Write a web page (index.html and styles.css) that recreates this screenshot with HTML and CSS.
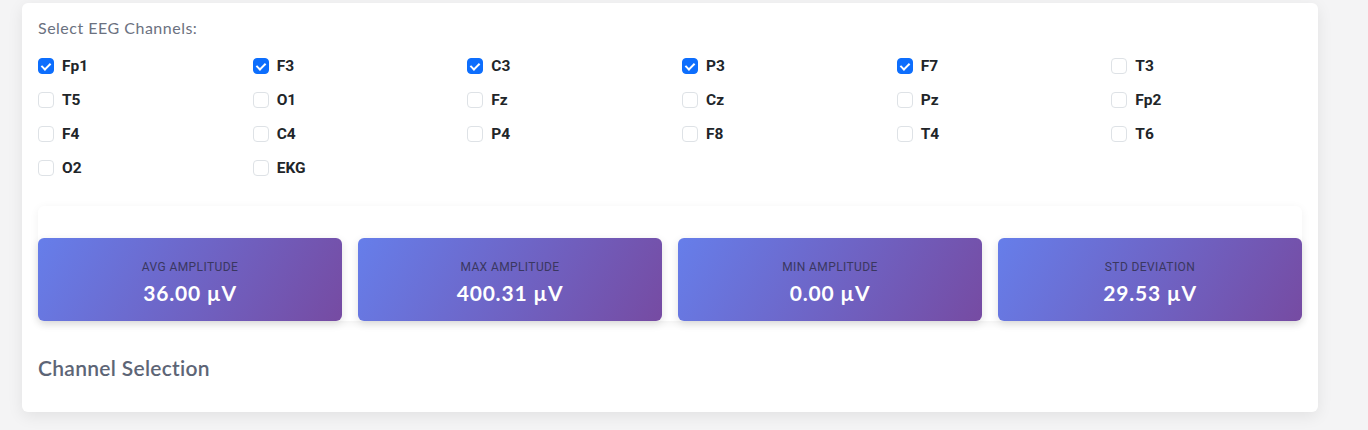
FILE: index.html
```html
<!DOCTYPE html>
<html lang="en">
<head>
<meta charset="utf-8">
<title>EEG Channels</title>
<link rel="stylesheet" href="styles.css">
</head>
<body>
<div class="panel">
  <div class="section-label">Select EEG Channels:</div>
  <div class="channel-grid">
    <label class="check"><span class="box checked"></span><span class="name">Fp1</span></label>
    <label class="check"><span class="box checked"></span><span class="name">F3</span></label>
    <label class="check"><span class="box checked"></span><span class="name">C3</span></label>
    <label class="check"><span class="box checked"></span><span class="name">P3</span></label>
    <label class="check"><span class="box checked"></span><span class="name">F7</span></label>
    <label class="check"><span class="box"></span><span class="name">T3</span></label>
    <label class="check"><span class="box"></span><span class="name">T5</span></label>
    <label class="check"><span class="box"></span><span class="name">O1</span></label>
    <label class="check"><span class="box"></span><span class="name">Fz</span></label>
    <label class="check"><span class="box"></span><span class="name">Cz</span></label>
    <label class="check"><span class="box"></span><span class="name">Pz</span></label>
    <label class="check"><span class="box"></span><span class="name">Fp2</span></label>
    <label class="check"><span class="box"></span><span class="name">F4</span></label>
    <label class="check"><span class="box"></span><span class="name">C4</span></label>
    <label class="check"><span class="box"></span><span class="name">P4</span></label>
    <label class="check"><span class="box"></span><span class="name">F8</span></label>
    <label class="check"><span class="box"></span><span class="name">T4</span></label>
    <label class="check"><span class="box"></span><span class="name">T6</span></label>
    <label class="check"><span class="box"></span><span class="name">O2</span></label>
    <label class="check"><span class="box"></span><span class="name">EKG</span></label>
  </div>

  <div class="stats-wrap">
    <div class="stats">
      <div class="stat"><div class="stat-title">AVG AMPLITUDE</div><div class="stat-value">36.00 µV</div></div>
      <div class="stat"><div class="stat-title">MAX AMPLITUDE</div><div class="stat-value">400.31 µV</div></div>
      <div class="stat"><div class="stat-title">MIN AMPLITUDE</div><div class="stat-value">0.00 µV</div></div>
      <div class="stat"><div class="stat-title">STD DEVIATION</div><div class="stat-value">29.53 µV</div></div>
    </div>
  </div>

  <h2 class="heading">Channel Selection</h2>
</div>
</body>
</html>
```

FILE: styles.css
```css
* { box-sizing: border-box; }

html, body {
  margin: 0;
  padding: 0;
  background: #f4f4f5;
  height: 430px;
  overflow: hidden;
}

body {
  padding: 3px 50px 0 22px;
  font-family: Roboto, "Liberation Sans", sans-serif;
}

.panel {
  width: 1296px;
  height: 409px;
  background: #fff;
  border-radius: 6px;
  box-shadow: 0 4px 16px rgba(0, 0, 0, 0.08);
  padding: 15px 16px 0 16px;
}

.section-label {
  font-family: Lato, "Open Sans", sans-serif;
  font-size: 16px;
  letter-spacing: 0.5px;
  color: #6b7180;
  line-height: 20px;
  margin-bottom: 11px;
}

.channel-grid {
  display: grid;
  grid-template-columns: repeat(6, 1fr);
  margin: 0 -12px;
  row-gap: 0;
}

.check {
  display: flex;
  align-items: center;
  height: 34px;
  padding: 0 12px;
  gap: 8px;
}

.box {
  width: 16px;
  height: 16px;
  border: 1px solid #dee2e6;
  border-radius: 4px;
  background: #fff;
  flex: none;
  position: relative;
}

.box.checked {
  background: #0d6efd;
  border-color: #0d6efd;
}

.box.checked::after {
  content: "";
  position: absolute;
  left: 4px;
  top: 2px;
  width: 4px;
  height: 7px;
  border: solid #fff;
  border-width: 0 2px 2px 0;
  transform: rotate(45deg);
}

.name {
  font-size: 15.5px;
  font-weight: 700;
  color: #212529;
  line-height: 20px;
}

.stats-wrap {
  margin-top: 21px;
  background: #fff;
  border-radius: 6px;
  box-shadow: 0 2px 10px rgba(0, 0, 0, 0.06);
  padding-top: 32px;
}

.stats {
  display: grid;
  grid-template-columns: repeat(4, 1fr);
  gap: 16px;
}

.stat {
  height: 83px;
  border-radius: 6px;
  background: linear-gradient(120deg, #667eea 0%, #764ba2 100%);
  box-shadow: 0 3px 8px rgba(0, 0, 0, 0.12);
  display: flex;
  flex-direction: column;
  align-items: center;
  padding-top: 22px;
}

.stat-title {
  font-size: 12px;
  letter-spacing: 0.4px;
  color: #3a3760;
  line-height: 14px;
}

.stat-value {
  margin-top: 6px;
  font-family: Lato, "Open Sans", sans-serif;
  font-weight: 700;
  font-size: 21px;
  letter-spacing: 0.8px;
  color: #fff;
  line-height: 26px;
}

.heading {
  margin: 34px 0 0 0;
  font-family: Lato, "Open Sans", sans-serif;
  font-weight: 600;
  font-size: 21px;
  letter-spacing: 0.3px;
  color: #5d6576;
  line-height: 26px;
}
```
